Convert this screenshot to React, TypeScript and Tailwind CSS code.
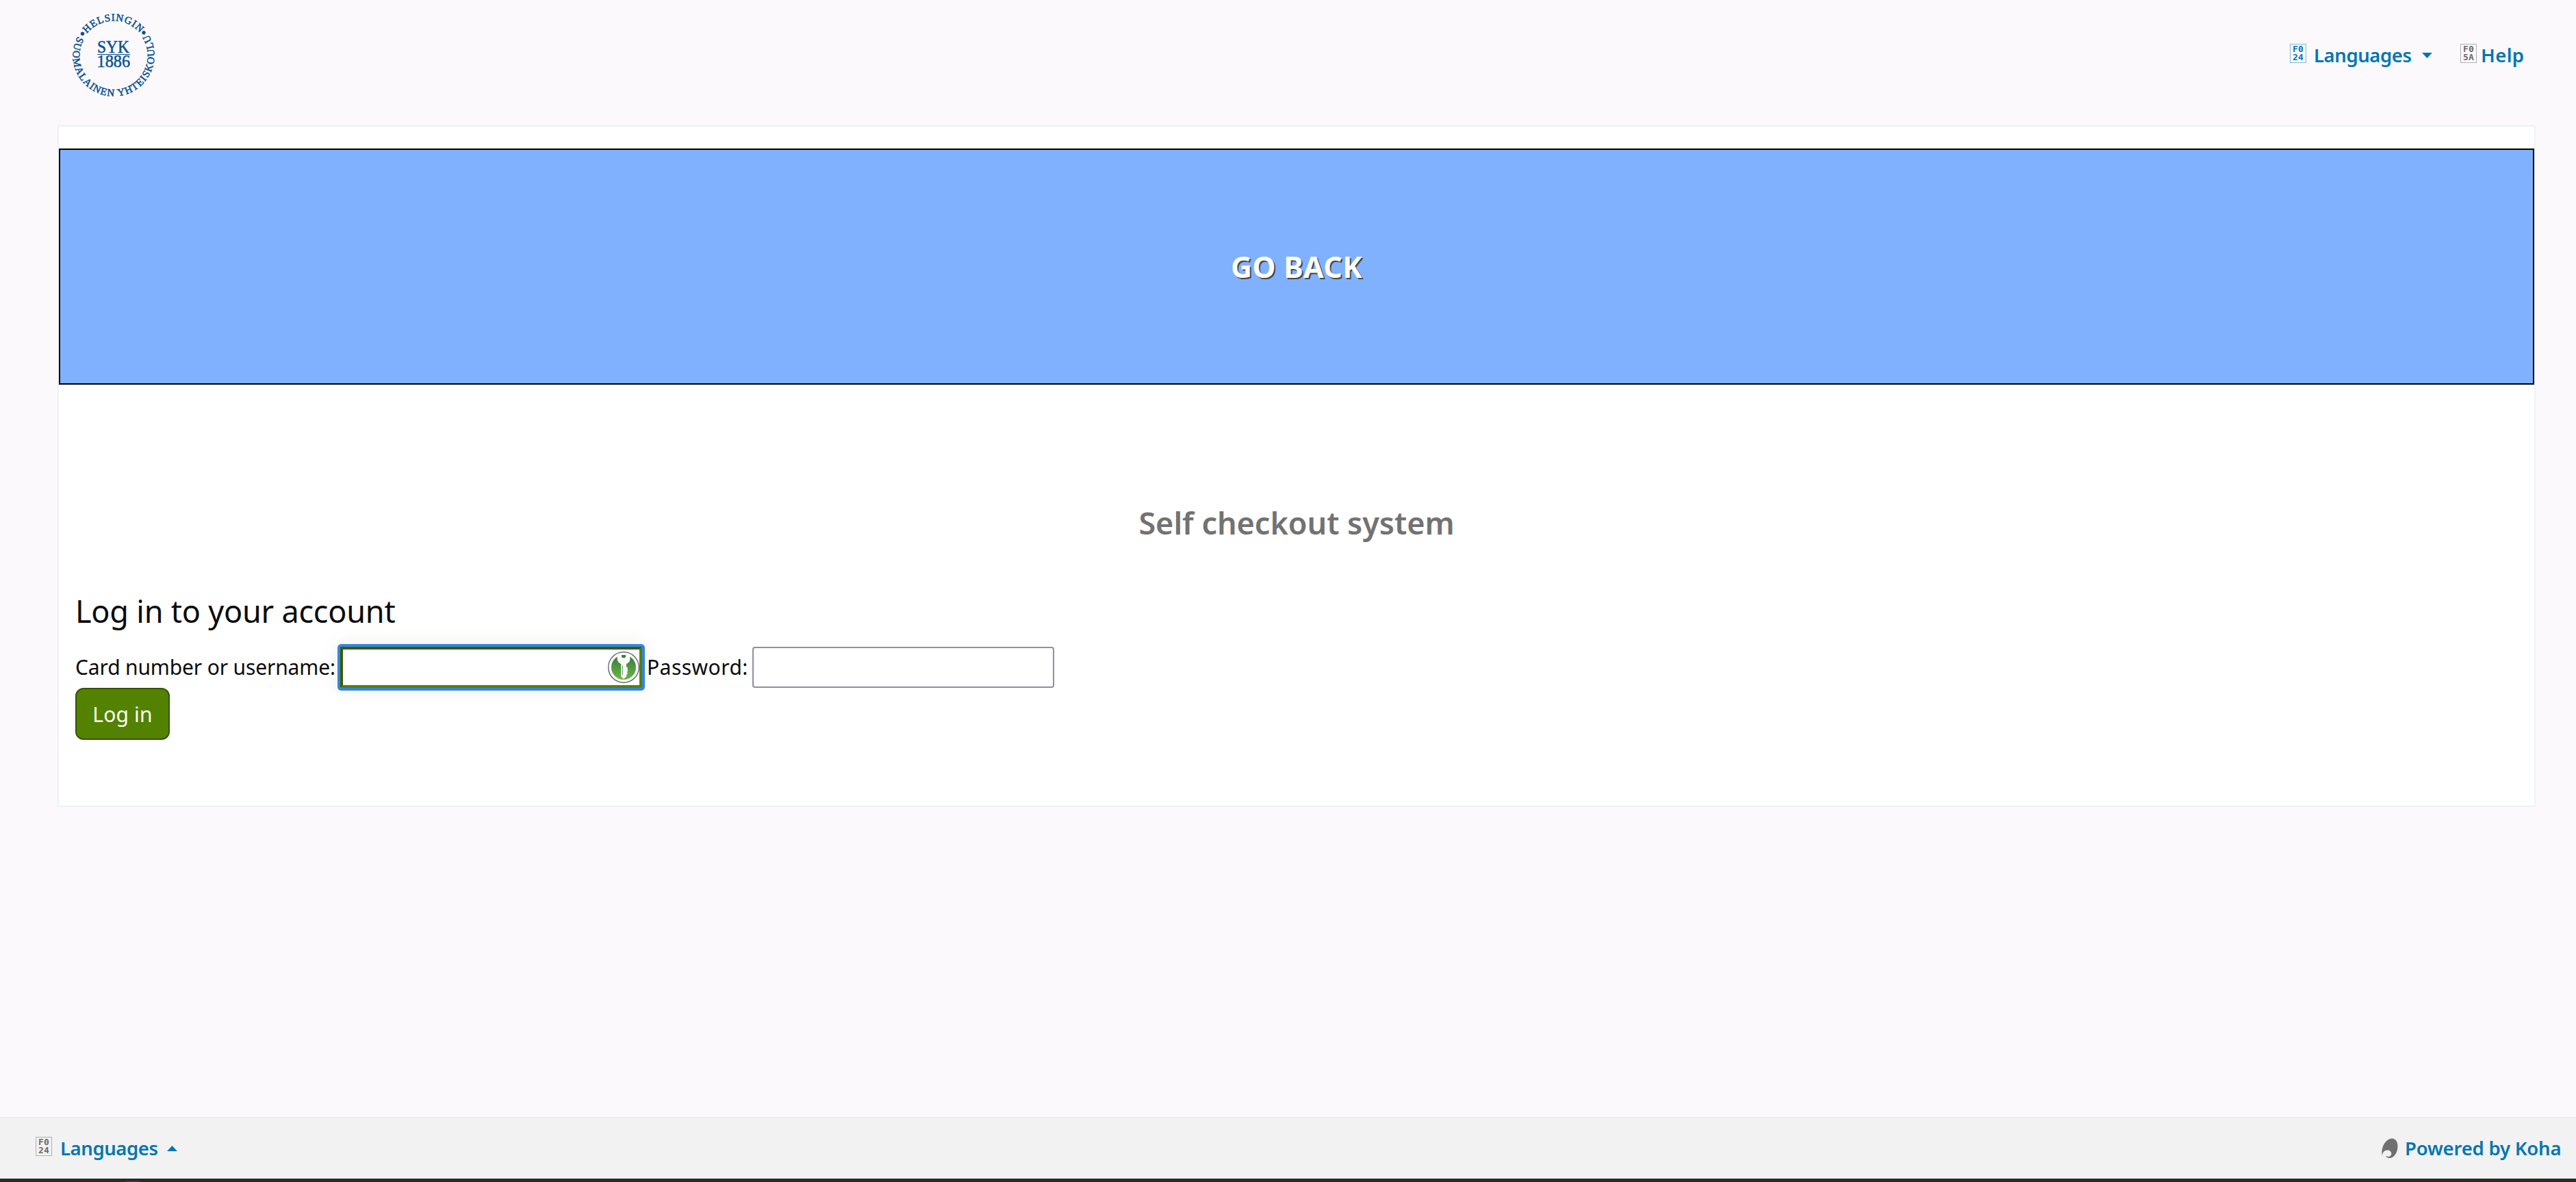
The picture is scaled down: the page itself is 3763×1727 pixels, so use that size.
import React from "react";

function HexGlyph({ top, bottom, tone }: { top: string; bottom: string; tone: string }) {
  return (
    <span
      className={`flex h-7 w-6 -translate-y-[3px] flex-col items-center justify-center border font-['DejaVu_Sans_Mono',monospace] text-[13px] leading-[12px] font-bold tracking-[0.2px] ${tone}`}
    >
      <span>{top}</span>
      <span>{bottom}</span>
    </span>
  );
}

function Logo() {
  return (
    <svg width="120" height="120" viewBox="0 0 120 120" fill="#0a5290" className="overflow-visible font-['Liberation_Serif',serif]">
      <defs>
        <path id="ring-top" d="M20.8 28.2A50.5 50.5 0 0 1 98.1 26.9" />
        <path id="ring-bottom" d="M7.5 32.1A59.5 59.5 0 1 0 112 31.2" />
      </defs>
      <g fontSize="15" stroke="#0a5290" strokeWidth="0.55">
        <text><textPath href="#ring-top" textLength="88" lengthAdjust="spacing">HELSINGIN</textPath></text>
        <text><textPath href="#ring-bottom" textLength="248" lengthAdjust="spacing">SUOMALAINEN YHTEISKOULU</textPath></text>
      </g>
      <circle cx="14.5" cy="28.3" r="2.7" />
      <circle cx="104" cy="26.7" r="2.7" />
      <g fontSize="25" stroke="#0a5290" strokeWidth="0.5">
        <text x="36" y="56.3" textLength="47" lengthAdjust="spacingAndGlyphs">SYK</text>
        <text x="35.5" y="77" textLength="48.5" lengthAdjust="spacingAndGlyphs">1886</text>
      </g>
      <rect x="36" y="58" width="48" height="1" />
    </svg>
  );
}

function KeyIcon() {
  return (
    <svg width="46" height="46" viewBox="0 0 46 46">
      <defs>
        <linearGradient id="key-green" x1="0" y1="0" x2="0" y2="1">
          <stop offset="0" stopColor="#327a38" />
          <stop offset="1" stopColor="#6fb548" />
        </linearGradient>
      </defs>
      <circle cx="23" cy="23" r="22.3" fill="#fafafa" stroke="#55555a" strokeWidth="1.2" />
      <circle cx="23" cy="23" r="18" fill="url(#key-green)" />
      <path
        d="M13.5 3.5H32.5L32.3 12.5C31.5 15.5 29 17 27 18V22.5L29.2 23.5L28.5 25.5L29.3 28L27.8 30L29 31.5L27 34.5V36.5L23 40L19.2 36.5V18C16.5 17 14.5 15 13.8 12.5Z"
        fill="#fafafa"
      />
      <path d="M20 5H26V7.500L24.800 9.200H21.200L20 7.500Z" fill="#38803a" />
      <path d="M21.500 20V34" stroke="#63a856" strokeWidth="1" />
    </svg>
  );
}

function KohaMark() {
  return (
    <svg width="24" height="30" viewBox="0 0 24 30">
      <path
        d="M0.8 26C-1.3 13 6 0.5 15.5 0.5C21 0.5 23.7 6 23.5 12.5C23.2 21.5 18 29 11.5 29C8.5 29 6.5 27.5 6.5 25.5C8.5 27.8 13.8 27.5 14.3 23C14.5 19.5 11.5 17.3 8 17.5C4 17.7 1.3 20.5 0.8 26Z"
        fill="#707070"
      />
    </svg>
  );
}

const link = "text-[27.5px] leading-10 font-semibold whitespace-nowrap text-[#0076b2]";

export default function App() {
  return (
    <div className="flex h-[1727px] w-full flex-col overflow-hidden bg-[#fbf9fc] font-['Noto_Sans',sans-serif] text-[#0b0b0b]">
      <header className="flex h-[162px] shrink-0 items-center justify-between pr-[76px] pl-[106px]">
        <Logo />
        <nav className="flex items-center">
          <a className="flex items-center text-[#0076b2]">
            <HexGlyph top="F0" bottom="24" tone="border-[#7fb9d8] text-[#0076b2]" />
            <span className={`ml-[11px] w-[158px] tracking-[-0.42px] ${link}`}>Languages</span>
            <svg width="15" height="8" viewBox="0 0 15 8" fill="#0076b2"><path d="M0 0H15L7.500 8Z" /></svg>
          </a>
          <a className="ml-[41px] flex items-center">
            <HexGlyph top="F0" bottom="5A" tone="border-[#b0afb1] text-[#6b6b6b]" />
            <span className={`ml-[6px] w-[63px] tracking-[0.4px] ${link}`}>Help</span>
          </a>
        </nav>
      </header>

      <main className="mt-[21px] mr-[59px] ml-[84px] flex h-[996px] shrink-0 flex-col border-2 border-[#eef2f4] bg-white pt-8">
        <button className="h-[345px] shrink-0 border-2 border-black bg-[#80b1ff] text-[43px] leading-[60px] font-bold tracking-[0.3px] text-white [text-shadow:2px_2px_0_#474747]">
          GO BACK
        </button>
        <h1 className="mt-[172px] text-center text-[45px] leading-[60px] font-semibold tracking-[-0.05px] text-[#727272]">
          Self checkout system
        </h1>
        <section className="px-6">
          <h2 className="mt-[69px] text-[45px] leading-[60px] tracking-[-0.22px]">Log in to your account</h2>
          <div className="mt-[22px] flex h-[60px] items-center text-[30px] leading-[60px] whitespace-nowrap">
            <label className="w-[387px] tracking-[-0.15px]">Card number or username:</label>
            <div className="flex h-[60px] w-[441px] items-center justify-end rounded-[2px] border-4 border-t-[#3a5c00] border-r-[#538200] border-b-[#538200] border-l-[#3a5c00] bg-white shadow-[0_0_0_4px_#3584e4,0_0_24px_4px_rgba(83,130,0,0.1)]">
              <KeyIcon />
            </div>
            <label className="ml-[7px] w-[154px] tracking-[0.45px]">Password:</label>
            <div className="h-[60px] w-[441px] rounded-[4px] border-2 border-[#8f8f9d] bg-white" />
          </div>
          <button className="h-[76px] w-[138px] rounded-[12px] border-2 border-[#355400] bg-[#538200] text-[30px] tracking-[0.15px] text-white">
            Log in
          </button>
        </section>
      </main>

      <footer className="mt-auto flex h-[90px] shrink-0 items-center justify-between border-t-2 border-[#ededed] bg-[#f2f2f2] pr-[21px] pl-[52px]">
        <a className="flex items-center">
          <HexGlyph top="F0" bottom="24" tone="border-[#b0b0b0] text-[#6b6b6b]" />
          <span className={`ml-[12px] w-[156px] tracking-[-0.42px] ${link}`}>Languages</span>
          <svg width="15" height="8" viewBox="0 0 15 8" fill="#0076b2"><path d="M0 8H15L7.500 0Z" /></svg>
        </a>
        <a className="flex items-center">
          <KohaMark />
          <span className={`ml-[10px] w-[229px] tracking-[-0.2px] ${link}`}>Powered by Koha</span>
        </a>
      </footer>
      <div className="flex h-[5px] shrink-0 items-end bg-[#2b2a2b]">
        <div className="ml-[184px] h-px w-5 bg-[#4a4953]" />
      </div>
    </div>
  );
}
